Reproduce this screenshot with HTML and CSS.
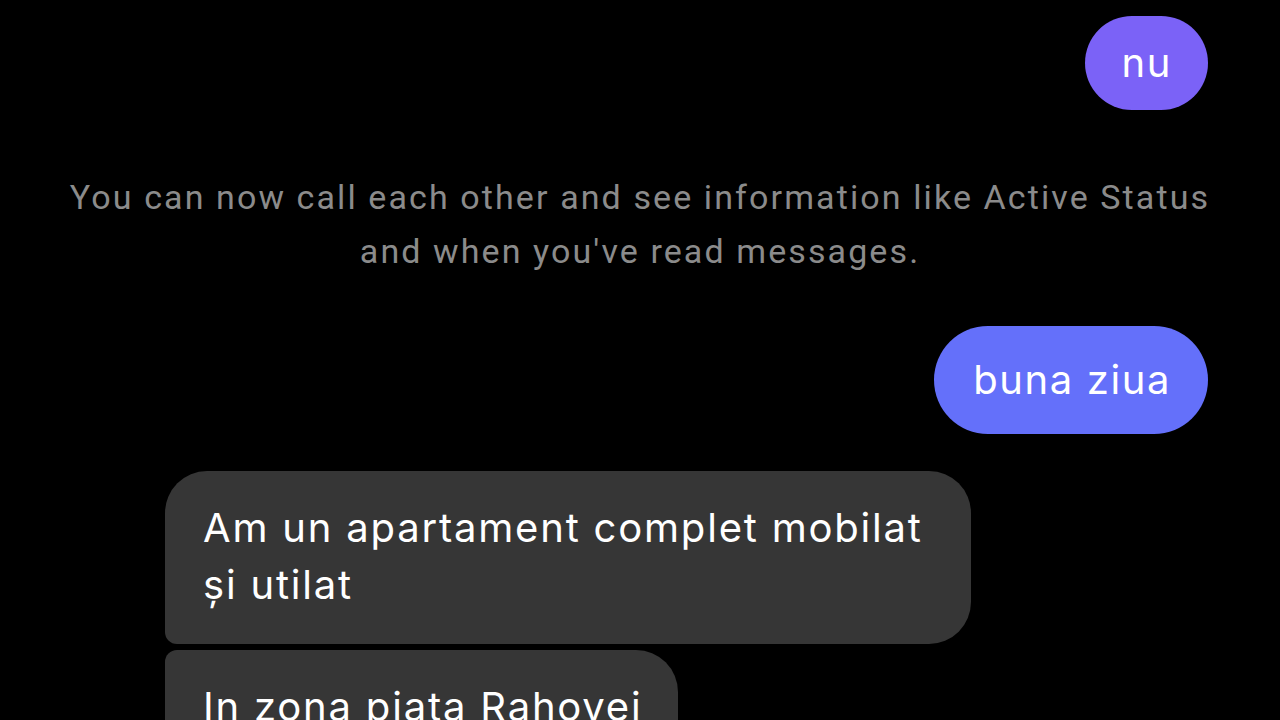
FILE: index.html
```html
<!DOCTYPE html>
<html lang="ro">
<head>
  <meta charset="UTF-8" />
  <meta name="viewport" content="width=device-width, initial-scale=1.0"/>
  <title>Chat</title>
  <link rel="stylesheet" href="styles.css">
</head>
<body>

  <div class="thread">
    <div class="row row-out">
      <div class="bubble bubble-violet">nu</div>
    </div>

    <p class="notice">You can now call each other and see information like Active Status<br>and when you've read messages.</p>

    <div class="row row-out">
      <div class="bubble bubble-blue">buna ziua</div>
    </div>

    <div class="group-in">
      <div class="bubble bubble-in first">Am un apartament complet mobilat<br>și utilat</div>
      <div class="bubble bubble-in last">In zona piata Rahovei</div>
    </div>
  </div>

</body>
</html>
```

FILE: styles.css
```css
body {
  margin: 0;
  background: #000;
  font-family: Inter, "Noto Sans", sans-serif;
  color: #fff;
  overflow: hidden;
}
.thread {
  display: flex;
  flex-direction: column;
  padding: 16px 72px 0;
}
.row {
  display: flex;
}
.row-out {
  justify-content: flex-end;
}
.bubble {
  font-size: 40px;
  line-height: 46px;
  letter-spacing: 1.6px;
  border-radius: 54px;
}
.bubble-violet {
  background: #7b62f7;
  padding: 24px 36px 24px 37px;
}
.bubble-blue {
  background: #6470fa;
  padding: 31px 37px 31px 39px;
}
.notice {
  margin: 60px -40px 48px;
  text-align: center;
  color: #8b8b8b;
  font-family: Roboto, sans-serif;
  font-size: 34px;
  line-height: 54px;
  letter-spacing: 2.1px;
  white-space: nowrap;
}
.group-in {
  display: flex;
  flex-direction: column;
  align-items: flex-start;
  gap: 6px;
  margin-top: 37px;
  padding-left: 93px;
}
.bubble-in {
  background: #363636;
  padding: 28px 36px 31px 38px;
  line-height: 57px;
  letter-spacing: 1.8px;
  border-radius: 42px;
}
.bubble-in.first {
  border-bottom-left-radius: 12px;
  padding-right: 48px;
}
.bubble-in.last {
  border-top-left-radius: 12px;
}
```
